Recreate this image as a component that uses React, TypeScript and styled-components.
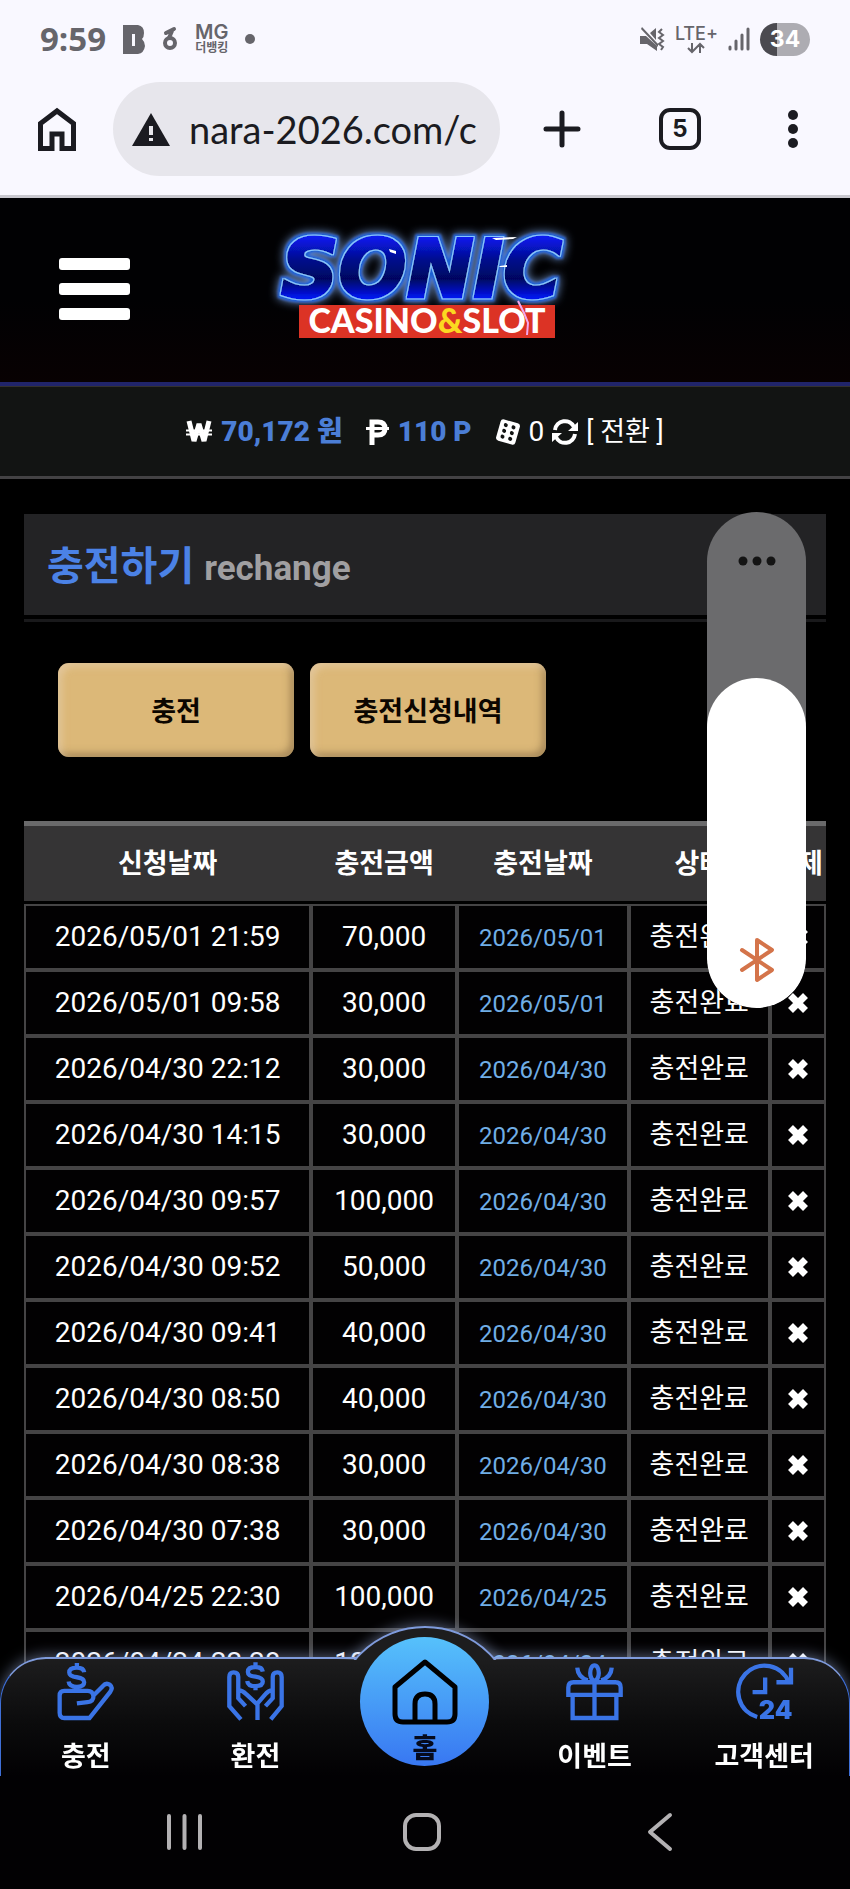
import React from "react";
import styled, { createGlobalStyle } from "styled-components";

const GlobalStyle = createGlobalStyle`
  * { box-sizing: border-box; }
  html, body { margin: 0; background: #000; }
  body {
    color: #fff;
    font-family: Roboto, "Noto Sans CJK KR", sans-serif;
    font-size: 28px;
    overflow-x: hidden;
  }
  button { border: 0; padding: 0; background: none; color: inherit; font: inherit; cursor: pointer; }
  a { color: inherit; text-decoration: none; }
  svg { display: block; overflow: visible; }
`;

const Page = styled.div`
  min-height: 100vh;
  position: relative;
`;

/* ---------- phone status bar and browser toolbar ---------- */

const BrowserChrome = styled.div`
  background: #f9f8ff;
  border-bottom: 3px solid #c9c8cf;
  padding-bottom: 19px;
  color: #1b1b21;
`;

const StatusBar = styled.div`
  height: 82px;
  padding: 0 40px 4px 40px;
  display: flex;
  align-items: center;
  justify-content: space-between;
  color: #66656b;
`;

const StatusGroup = styled.div<{ $gap: number }>`
  display: flex;
  align-items: center;
  gap: ${(p) => p.$gap}px;
`;

const Clock = styled.span`
  font-family: "Open Sans", sans-serif;
  font-weight: 700;
  font-size: 33px;
  line-height: 40px;
`;

const BankLabel = styled.span`
  display: flex;
  flex-direction: column;
  align-items: center;
  font-family: Inter, "Noto Sans CJK KR", sans-serif;
  font-weight: 600;
  font-size: 20px;
  line-height: 18px;
  small { font-size: 12px; line-height: 14px; font-weight: 700; }
`;

const Dot = styled.span`
  width: 10px;
  height: 10px;
  border-radius: 50%;
  background: #66656b;
`;

const Network = styled.span`
  display: flex;
  flex-direction: column;
  align-items: center;
  font-family: Inter, sans-serif;
  font-weight: 500;
  font-size: 18px;
  line-height: 18px;
`;

const Battery = styled.span`
  width: 50px;
  height: 33px;
  border-radius: 17px;
  background: linear-gradient(90deg, #4b4a50 34%, #adacb2 34%);
  color: #fff;
  font-family: Inter, sans-serif;
  font-weight: 700;
  font-size: 23px;
  line-height: 33px;
  text-align: center;
`;

const Toolbar = styled.div`
  display: flex;
  align-items: center;
  padding: 0 52px 0 38px;
`;

const AddressBar = styled.label`
  flex: 1;
  min-width: 0;
  height: 94px;
  margin: 0 43px 0 37px;
  padding: 0 18px 0 19px;
  border-radius: 47px;
  background: #e7e6ec;
  display: flex;
  align-items: center;
  gap: 19px;
`;

const AddressInput = styled.input`
  flex: 1;
  min-width: 0;
  border: 0;
  padding: 0;
  outline: 0;
  background: none;
  color: #1b1b21;
  font-family: Lato, sans-serif;
  font-size: 38px;
  line-height: 48px;
`;

const TabCount = styled.button`
  width: 42px;
  height: 42px;
  margin: 0 87px 0 78px;
  border: 4px solid #1b1b21;
  border-radius: 11px;
  font-family: Inter, sans-serif;
  font-weight: 700;
  font-size: 24px;
  line-height: 34px;
`;

/* ---------- site header ---------- */

const SiteHeader = styled.header`
  height: 188px;
  display: grid;
  grid-template-columns: 1fr auto 1fr;
  align-items: center;
  padding: 0 59px 2px;
  background: linear-gradient(#010103 55%, #080102);
  border-bottom: 4px solid #20246a;
`;

const MenuButton = styled.button`
  width: 71px;
  display: flex;
  flex-direction: column;
  gap: 13px;
  span { height: 12px; border-radius: 3px; background: #fff; }
`;

const Wallet = styled.div`
  height: 93px;
  display: flex;
  align-items: center;
  justify-content: center;
  background: #121413;
  border-top: 1px solid #33312f;
  border-bottom: 3px solid #434244;
  line-height: 40px;
`;

const Balance = styled.span`
  display: flex;
  align-items: center;
  gap: 9px;
  margin-right: 23px;
  font-weight: 700;
  white-space: pre;
  b { color: #4b7ed6; }
`;

const Casino = styled.span`
  display: flex;
  align-items: center;
  gap: 8px;
`;

const Convert = styled.button`
  display: flex;
  align-items: center;
  gap: 8px;
  font-size: 27px;
  line-height: 40px;
`;

/* ---------- page content ---------- */

const Content = styled.main`
  padding: 35px 24px 0;
`;

const TitleBar = styled.div`
  height: 101px;
  padding: 6px 23px 0;
  display: flex;
  align-items: center;
  background: #232325;
`;

const Title = styled.h1`
  margin: 0;
  color: #4b82e6;
  font-size: 40px;
  line-height: 56px;
  font-weight: 700;
  small { color: #a09fa1; font-size: 35px; font-weight: 700; }
`;

const TitleRule = styled.div`
  height: 3px;
  margin-top: 4px;
  background: #19191b;
`;

const TabRow = styled.div`
  display: flex;
  gap: 16px;
  padding: 41px 34px 64px;
`;

const GoldButton = styled.button`
  width: 236px;
  height: 94px;
  padding-bottom: 2px;
  border-radius: 11px;
  background: #dcb878;
  box-shadow: inset 4px 4px 7px rgba(232, 208, 176, 0.6), inset -4px -4px 7px rgba(120, 96, 62, 0.5);
  color: #0c0600;
  font-size: 27px;
  font-weight: 700;
`;

const History = styled.table`
  width: 100%;
  table-layout: fixed;
  border-collapse: separate;
  border-spacing: 0;
  text-align: center;
`;

const Col = styled.col<{ $share: number }>`
  width: ${(p) => p.$share}%;
`;

const HeadCell = styled.th`
  height: 83px;
  padding: 0;
  background: #353435;
  border-top: 5px solid #6a6a6b;
  border-bottom: 3px solid #000;
  font-size: 27px;
  line-height: 40px;
  font-weight: 700;
  white-space: nowrap;
`;

const Cell = styled.td<{ $kind?: "date" | "state" }>`
  height: 66px;
  padding: ${(p) => (p.$kind === "date" ? "2px 0 0" : "0")};
  border: 2px solid #454445;
  background: #020102;
  white-space: nowrap;
  line-height: 40px;
  color: ${(p) => (p.$kind === "date" ? "#70aee6" : "#fff")};
  font-size: ${(p) => (p.$kind === "date" ? 24 : p.$kind === "state" ? 27 : 28)}px;
`;

const DeleteButton = styled.button`
  display: block;
  margin: 0 auto;
`;

/* ---------- volume overlay ---------- */

const VolumePanel = styled.label`
  position: absolute;
  top: 512px;
  right: 44px;
  width: 99px;
  height: 496px;
  border-radius: 50px;
  overflow: hidden;
  background: #6b6b6d;
  display: flex;
  flex-direction: column;
  align-items: center;
  justify-content: space-between;
  padding-top: 44px;
`;

const VolumeLevel = styled.span`
  width: 100%;
  height: 330px;
  border-radius: 50px;
  background: #fff;
  display: flex;
  align-items: flex-end;
  justify-content: center;
  padding-bottom: 26px;
`;

const VolumeInput = styled.input`
  position: absolute;
  inset: 0;
  width: 100%;
  height: 100%;
  margin: 0;
  opacity: 0;
  writing-mode: vertical-lr;
  direction: rtl;
`;

/* ---------- bottom navigation ---------- */

const Dock = styled.div`
  position: fixed;
  left: 0;
  right: 0;
  bottom: 0;
`;

const BottomNav = styled.nav`
  position: relative;
  height: 119px;
  display: grid;
  grid-template-columns: repeat(5, 1fr);
  border: 1px solid #3f6fd6;
  border-top: 2px solid #7f9bdc;
  border-bottom: 0;
  border-radius: 46px 46px 0 0;
  background: linear-gradient(#1d1d1e, #0b0b0c 55%, #020103);
  box-shadow: 0 -2px 14px rgba(170, 190, 235, 0.45);
`;

const Bump = styled.span`
  position: absolute;
  left: calc(50% - 92px);
  top: -33px;
  width: 184px;
  height: 184px;
  border: 2px solid #7f9bdc;
  border-radius: 50%;
  background: #1d1d1e;
  box-shadow: 0 -2px 14px rgba(170, 190, 235, 0.45);
  clip-path: inset(-24px -24px 150px -24px);
`;

const NavLink = styled.a`
  display: flex;
  flex-direction: column;
  align-items: center;
  gap: 17px;
  padding-top: 4px;
  font-size: 27px;
  line-height: 40px;
  font-weight: 700;
  white-space: nowrap;
  color: #fff;
  svg { color: #3a74e6; }
`;

const HomeLink = styled.a`
  position: relative;
  justify-self: center;
  width: 129px;
  height: 129px;
  margin-top: -22px;
  padding-top: 22px;
  border-radius: 50%;
  background: linear-gradient(#56c1fb, #3877f2);
  display: flex;
  flex-direction: column;
  align-items: center;
  gap: 4px;
  color: #050a1c;
  font-size: 27px;
  line-height: 40px;
  font-weight: 900;
`;

const SystemNav = styled.div`
  position: relative;
  height: 113px;
  display: grid;
  grid-template-columns: repeat(3, 1fr);
  place-items: center;
  padding: 0 71px 2px 65px;
  background: #020103;
`;

/* ---------- drawings ---------- */

const Logo = () => (
  <svg width="340" height="150" viewBox="-5 -1 340 150" role="img" aria-label="Sonic Casino and Slot">
    <defs>
      <linearGradient id="wordFill" x1="0" y1="0" x2="0" y2="1">
        <stop offset="0.15" stopColor="#0a1cf0" />
        <stop offset="0.4" stopColor="#030a8c" />
        <stop offset="0.6" stopColor="#020660" />
        <stop offset="0.8" stopColor="#0614ee" />
      </linearGradient>
      <filter id="glow" x="-15%" y="-40%" width="130%" height="180%">
        <feMorphology in="SourceAlpha" operator="dilate" radius="3" result="fat" />
        <feGaussianBlur in="fat" stdDeviation="5" result="haze" />
        <feFlood floodColor="#6f93cc" />
        <feComposite in2="haze" operator="in" result="halo" />
        <feGaussianBlur in="fat" stdDeviation="1" result="edge" />
        <feFlood floodColor="#1f62d4" />
        <feComposite in2="edge" operator="in" result="rim" />
        <feMorphology in="SourceAlpha" operator="dilate" radius="1" result="wide" />
        <feFlood floodColor="#86c4ff" />
        <feComposite in2="wide" operator="in" result="outline" />
        <feMerge>
          <feMergeNode in="halo" />
          <feMergeNode in="rim" />
          <feMergeNode in="outline" />
          <feMergeNode in="SourceGraphic" />
        </feMerge>
      </filter>
    </defs>
    <text
      x="21"
      y="82"
      fontFamily="'DejaVu Sans', sans-serif"
      fontWeight="700"
      fontStyle="italic"
      fontSize="80"
      fill="url(#wordFill)"
      stroke="url(#wordFill)"
      strokeWidth="3"
      filter="url(#glow)"
    >
      SONIC
    </text>
    <path d="M129 34l7 2v3l-6-2zM240 51l7-1v2h-8zM232 23l25-1-4 2-17 1z" fill="#fff" />
    <rect x="39" y="90" width="256" height="33" fill="#dc3325" />
    <text x="167" y="118" textAnchor="middle" fontFamily="Lato, sans-serif" fontWeight="900" fontSize="34" fill="#fff">
      CASINO<tspan fill="#fbd821">&amp;</tspan>SLOT
    </text>
    <path d="M258 86l6 12 4 10-1 12" fill="none" stroke="#f3a8ee" strokeWidth="2" />
  </svg>
);

const dollar = "M82 28Q80 14 60 14Q37 14 37 29Q37 41 60 43Q82 46 82 58Q82 72 60 72Q37 72 35 56M60 0V14M60 72V84";

const Line = ({ d, children }: { d: string; children?: React.ReactNode }) => (
  <svg width="57" height="57" viewBox="0 0 172 172" fill="none" stroke="currentColor" strokeWidth="13">
    <path d={d} />
    {children}
  </svg>
);

const DepositIcon = () => (
  <Line d={dollar + "M60 122L92 118Q110 116 110 100Q108 84 92 84H22Q8 84 8 98V150Q8 166 22 166H98L160 88Q170 74 160 66Q148 58 138 70L110 98"} />
);

const WithdrawIcon = () => (
  <Line d="M42 170L7 130V42Q7 28 20 28Q34 28 34 42V82Q48 84 58 94L92 126V172M34 80V106L56 130M132 170L165 130V42Q165 28 152 28Q138 28 138 42V82Q124 84 116 94L92 122M138 80V106L116 130">
    <path d={dollar} transform="translate(26 -2)" />
  </Line>
);

const GiftIcon = () => (
  <Line d="M7 96V74Q7 58 23 58H149Q165 58 165 74V96ZM20 96V166H152V96M86 52V166M34 14Q36 44 66 52M138 14Q136 44 106 52">
    <ellipse cx="86" cy="30" rx="13" ry="23" />
  </Line>
);

const SupportIcon = () => (
  <Line d="M64 163A79 79 0 1 1 160 60M166 14V58H122M88 44V88H50">
    <text x="170" y="170" textAnchor="end" fontFamily="Inter, sans-serif" fontWeight="900" fontSize="76" fill="currentColor" stroke="none">24</text>
  </Line>
);

const HouseIcon = () => (
  <svg width="66" height="66" viewBox="0 0 66 66" fill="none" stroke="#000" strokeWidth="5" strokeLinejoin="round">
    <path d="M33 3L63 28V55Q63 63 55 63H11Q3 63 3 55V28ZM23 63V45Q23 35 33 35Q43 35 43 45V63" />
  </svg>
);

const records: [string, string][] = [
  ["2026/05/01 21:59", "70,000"],
  ["2026/05/01 09:58", "30,000"],
  ["2026/04/30 22:12", "30,000"],
  ["2026/04/30 14:15", "30,000"],
  ["2026/04/30 09:57", "100,000"],
  ["2026/04/30 09:52", "50,000"],
  ["2026/04/30 09:41", "40,000"],
  ["2026/04/30 08:50", "40,000"],
  ["2026/04/30 08:38", "30,000"],
  ["2026/04/30 07:38", "30,000"],
  ["2026/04/25 22:30", "100,000"],
  ["2026/04/24 22:28", "100,000"],
];

const columns: [string, number][] = [
  ["신청날짜", 35.8],
  ["충전금액", 18.2],
  ["충전날짜", 21.4],
  ["상태", 17.6],
  ["삭제", 7],
];

export default function App() {
  return (
    <Page>
      <GlobalStyle />
      <BrowserChrome>
        <StatusBar>
          <StatusGroup $gap={17}>
            <Clock>9:59</Clock>
            <svg width="22" height="29" viewBox="0 0 22 29" fill="currentColor">
              <path fillRule="evenodd" d="M0 0H15Q21 1 21 8Q21 12 19 14Q22 17 22 21Q21 28 15 29H0ZM9 9V21H12V9Z" />
            </svg>
            <svg width="16" height="26" viewBox="0 0 16 26" fill="none" stroke="currentColor" strokeWidth="4">
              <circle cx="8" cy="17" r="5" />
              <path d="M4 7L12 3M7 12L10 5" strokeLinecap="round" />
            </svg>
            <BankLabel>MG<small>더뱅킹</small></BankLabel>
            <Dot />
          </StatusGroup>
          <StatusGroup $gap={10}>
            <svg width="25" height="26" viewBox="0 0 25 26" fill="currentColor">
              <path d="M0 10H6L17 20V25L7 18H0ZM10 7L16 2V14ZM2 1L18 18V21L1 3Z" />
              <path d="M22 3l-3 3 4 3-4 3 4 3-4 3 4 3-2 3" fill="none" stroke="currentColor" strokeWidth="2" />
            </svg>
            <Network>
              LTE+
              <svg width="16" height="10" viewBox="0 0 16 10" fill="none" stroke="currentColor" strokeWidth="2">
                <path d="M4 0V9M0 5L4 9L8 5M12 10V1M8 5L12 1L16 5" />
              </svg>
            </Network>
            <svg width="22" height="24" viewBox="0 0 22 24" stroke="currentColor" strokeWidth="3" strokeLinecap="round">
              <path d="M2 20V22M8 14V22M14 8V22M20 2V22" />
            </svg>
            <Battery>34</Battery>
          </StatusGroup>
        </StatusBar>
        <Toolbar>
          <button aria-label="Home">
            <svg width="38" height="43" viewBox="0 0 38 43" fill="none" stroke="currentColor" strokeWidth="5">
              <path d="M2.500 40.500V15.500L19 3L35.500 15.500V40.500H24V26H14V40.500Z" />
            </svg>
          </button>
          <AddressBar>
            <svg width="38" height="33" viewBox="0 0 38 33">
              <path d="M19 0L38 33H0Z" fill="#1b1b21" />
              <path d="M19 13V22M19 25V28" stroke="#e7e6ec" strokeWidth="4" />
            </svg>
            <AddressInput aria-label="Address" defaultValue="nara-2026.com/c" />
          </AddressBar>
          <button aria-label="New tab">
            <svg width="38" height="38" viewBox="0 0 38 38" stroke="currentColor" strokeWidth="5" strokeLinecap="round">
              <path d="M19 3V35M3 19H35" />
            </svg>
          </button>
          <TabCount aria-label="Tabs">5</TabCount>
          <button aria-label="More">
            <svg width="10" height="38" viewBox="0 0 10 38" fill="currentColor">
              <circle cx="5" cy="5" r="5" />
              <circle cx="5" cy="19" r="5" />
              <circle cx="5" cy="33" r="5" />
            </svg>
          </button>
        </Toolbar>
      </BrowserChrome>

      <SiteHeader>
        <MenuButton aria-label="Menu"><span /><span /><span /></MenuButton>
        <Logo />
      </SiteHeader>
      <Wallet>
        <Balance>
          <svg width="26" height="22" viewBox="0 0 26 22" fill="none" stroke="#fff">
            <path d="M3 0L8 20L13 3L18 20L23 0" strokeWidth="5" strokeLinejoin="bevel" />
            <path d="M0 9.500H26M0 13.500H26" strokeWidth="2" />
          </svg>
          <b>70,172 원</b>
        </Balance>
        <Balance>
          <svg width="23" height="26" viewBox="0 0 23 26" fill="none" stroke="#fff" strokeWidth="5">
            <path d="M6 26V3H12Q19 3 19 9.500Q19 16 12 16H6" />
            <path d="M0 9.500H23" strokeWidth="3" />
          </svg>
          <b>110 P</b>
        </Balance>
        <Casino>
          <svg width="26" height="26" viewBox="0 0 26 26">
            <g transform="rotate(16 13 13)">
              <rect x="3" y="2" width="20" height="22" rx="3" fill="#fff" />
              <g fill="#121413">
                <circle cx="9" cy="7" r="2" /><circle cx="17" cy="7" r="2" />
                <circle cx="9" cy="13" r="2" /><circle cx="17" cy="13" r="2" />
                <circle cx="9" cy="19" r="2" /><circle cx="17" cy="19" r="2" />
              </g>
            </g>
          </svg>
          0
          <Convert>
            <svg width="26" height="26" viewBox="0 0 26 26" fill="none" stroke="#fff" strokeWidth="4">
              <path d="M3 11A10 10 0 0 1 22 8M23 15A10 10 0 0 1 4 18" />
              <path d="M26 3V12H16ZM0 23V14H10Z" fill="#fff" stroke="none" />
            </svg>
            [ 전환 ]
          </Convert>
        </Casino>
      </Wallet>

      <Content>
        <TitleBar>
          <Title>충전하기 <small>rechange</small></Title>
        </TitleBar>
        <TitleRule />
        <TabRow>
          <GoldButton>충전</GoldButton>
          <GoldButton>충전신청내역</GoldButton>
        </TabRow>
        <History>
          <colgroup>
            {columns.map(([name, share]) => <Col key={name} $share={share} />)}
          </colgroup>
          <thead>
            <tr>{columns.map(([name]) => <HeadCell key={name} scope="col">{name}</HeadCell>)}</tr>
          </thead>
          <tbody>
            {records.map(([time, amount]) => (
              <tr key={time}>
                <Cell>{time}</Cell>
                <Cell>{amount}</Cell>
                <Cell $kind="date">{time.slice(0, 10)}</Cell>
                <Cell $kind="state">충전완료</Cell>
                <Cell>
                  <DeleteButton aria-label="삭제">
                    <svg width="20" height="20" viewBox="0 0 20 20" stroke="#fff" strokeWidth="7">
                      <path d="M2.500 2.500L17.500 17.500M17.500 2.500L2.500 17.500" />
                    </svg>
                  </DeleteButton>
                </Cell>
              </tr>
            ))}
          </tbody>
        </History>
      </Content>

      <VolumePanel>
        <svg width="38" height="10" viewBox="0 0 38 10" fill="#141414">
          <circle cx="5" cy="5" r="4.500" />
          <circle cx="19" cy="5" r="4.500" />
          <circle cx="33" cy="5" r="4.500" />
        </svg>
        <VolumeLevel>
          <svg width="34" height="44" viewBox="0 0 34 44" fill="none" stroke="#d4744a" strokeWidth="4" strokeLinecap="round" strokeLinejoin="round">
            <path d="M2 12L32 32L17 42V2L32 12L2 32" />
          </svg>
        </VolumeLevel>
        <VolumeInput type="range" aria-label="Volume" defaultValue={66} />
      </VolumePanel>

      <Dock>
        <BottomNav>
          <Bump />
          <NavLink href="#deposit"><DepositIcon />충전</NavLink>
          <NavLink href="#withdraw"><WithdrawIcon />환전</NavLink>
          <HomeLink href="#home"><HouseIcon />홈</HomeLink>
          <NavLink href="#event"><GiftIcon />이벤트</NavLink>
          <NavLink href="#support"><SupportIcon />고객센터</NavLink>
        </BottomNav>
        <SystemNav>
          <button aria-label="Recent apps">
            <svg width="35" height="36" viewBox="0 0 35 36" stroke="#b3b1b3" strokeWidth="4" strokeLinecap="round">
              <path d="M2 2V34M17.500 2V34M33 2V34" />
            </svg>
          </button>
          <button aria-label="Home screen">
            <svg width="38" height="38" viewBox="0 0 38 38" fill="none" stroke="#b3b1b3" strokeWidth="4">
              <rect x="2" y="2" width="34" height="34" rx="11" />
            </svg>
          </button>
          <button aria-label="Back">
            <svg width="24" height="38" viewBox="0 0 24 38" fill="none" stroke="#b3b1b3" strokeWidth="4" strokeLinecap="round" strokeLinejoin="round">
              <path d="M22 2L2 19L22 36" />
            </svg>
          </button>
        </SystemNav>
      </Dock>
    </Page>
  );
}
